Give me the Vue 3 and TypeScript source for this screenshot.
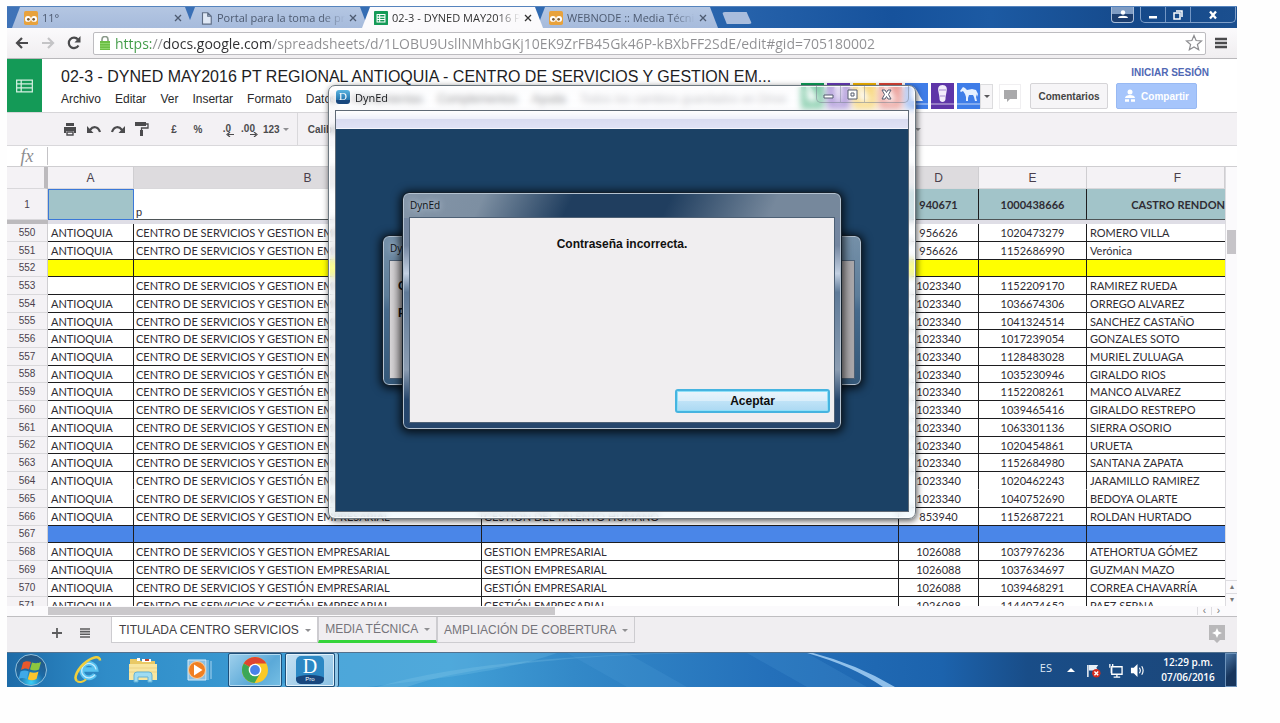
<script setup lang="ts">
import { ref } from 'vue'

interface BrowserTab { title: string; icon: 'owl' | 'page' | 'sheet'; active?: boolean }
interface Row { n: number; a: string; b: string; c: string; d: string; e: string; f: string; kind?: string }

const tabs: BrowserTab[] = [
  { title: '11°', icon: 'owl' },
  { title: 'Portal para la toma de pru', icon: 'page' },
  { title: '02-3 - DYNED MAY2016 P', icon: 'sheet', active: true },
  { title: 'WEBNODE :: Media Técnic', icon: 'owl' },
]

const menus = ['Archivo', 'Editar', 'Ver', 'Insertar', 'Formato', 'Datos', 'Herramientas', 'Complementos', 'Ayuda']
const url = ref('https://docs.google.com/spreadsheets/d/1LOBU9UsllNMhbGKj10EK9ZrFB45Gk46P-kBXbFF2SdE/edit#gid=705180002')
const formula = ref('')

const people = [
  { color: '#0f9d58', kind: 'bird' },
  { color: '#673ab7', kind: 'foot' },
  { color: '#f4b400', kind: 'bird' },
  { color: '#db4437', kind: 'bird' },
  { color: '#3f7de8', kind: 'bird' },
  { color: '#5e35a8', kind: 'foot' },
  { color: '#3f7de8', kind: 'horse' },
]

const ant = 'ANTIOQUIA'
const plain = 'CENTRO DE SERVICIOS Y GESTION EMPRESARIAL'
const accent = 'CENTRO DE SERVICIOS Y GESTIÓN EMPRESARIAL'
const th = 'GESTION DEL TALENTO HUMANO'
const ge = 'GESTION EMPRESARIAL'
const gea = 'GESTIÓN EMPRESARIAL'

const rows: Row[] = [
  { n: 550, a: ant, b: plain, c: th, d: '956626', e: '1020473279', f: 'ROMERO VILLA' },
  { n: 551, a: ant, b: plain, c: th, d: '956626', e: '1152686990', f: 'Verónica' },
  { n: 552, a: '', b: '', c: '', d: '', e: '', f: '', kind: 'short yellow' },
  { n: 553, a: '', b: plain, c: th, d: '1023340', e: '1152209170', f: 'RAMIREZ RUEDA' },
  { n: 554, a: ant, b: plain, c: th, d: '1023340', e: '1036674306', f: 'ORREGO ALVAREZ' },
  { n: 555, a: ant, b: plain, c: th, d: '1023340', e: '1041324514', f: 'SANCHEZ CASTAÑO', kind: 'short' },
  { n: 556, a: ant, b: plain, c: th, d: '1023340', e: '1017239054', f: 'GONZALES SOTO' },
  { n: 557, a: ant, b: plain, c: th, d: '1023340', e: '1128483028', f: 'MURIEL ZULUAGA' },
  { n: 558, a: ant, b: accent, c: th, d: '1023340', e: '1035230946', f: 'GIRALDO RIOS', kind: 'short' },
  { n: 559, a: ant, b: accent, c: th, d: '1023340', e: '1152208261', f: 'MANCO ALVAREZ' },
  { n: 560, a: ant, b: plain, c: th, d: '1023340', e: '1039465416', f: 'GIRALDO RESTREPO' },
  { n: 561, a: ant, b: plain, c: th, d: '1023340', e: '1063301136', f: 'SIERRA OSORIO' },
  { n: 562, a: ant, b: plain, c: th, d: '1023340', e: '1020454861', f: 'URUETA', kind: 'short' },
  { n: 563, a: ant, b: plain, c: th, d: '1023340', e: '1152684980', f: 'SANTANA ZAPATA' },
  { n: 564, a: ant, b: accent, c: th, d: '1023340', e: '1020462243', f: 'JARAMILLO RAMIREZ', kind: 'open' },
  { n: 565, a: ant, b: plain, c: th, d: '1023340', e: '1040752690', f: 'BEDOYA OLARTE' },
  { n: 566, a: ant, b: plain, c: th, d: '853940', e: '1152687221', f: 'ROLDAN HURTADO' },
  { n: 567, a: '', b: '', c: '', d: '', e: '', f: '', kind: 'short blue' },
  { n: 568, a: ant, b: plain, c: ge, d: '1026088', e: '1037976236', f: 'ATEHORTUA GÓMEZ' },
  { n: 569, a: ant, b: plain, c: ge, d: '1026088', e: '1037634697', f: 'GUZMAN MAZO' },
  { n: 570, a: ant, b: accent, c: gea, d: '1026088', e: '1039468291', f: 'CORREA CHAVARRÍA' },
  { n: 571, a: ant, b: accent, c: gea, d: '1026088', e: '1144074652', f: 'PAEZ SERNA' },
]
</script>

<template>
  <div class="desktop">
    <header class="tabstrip">
      <nav class="tabs" aria-label="Pestañas">
        <div v-for="t in tabs" :key="t.title" class="tab" :class="{ active: t.active }">
          <svg v-if="t.icon === 'owl'" class="fav" viewBox="0 0 16 16">
            <rect width="16" height="16" rx="2" fill="#e8a23c" />
            <circle cx="4.500" cy="9" r="3.400" fill="#fff" /><circle cx="11.500" cy="9" r="3.400" fill="#fff" />
            <circle cx="5" cy="9.500" r="1.500" fill="#7a5a30" /><circle cx="11" cy="9.500" r="1.500" fill="#7a5a30" />
          </svg>
          <svg v-else-if="t.icon === 'page'" class="fav" viewBox="0 0 16 16">
            <path d="M4 2h6l4 4v9H4zM10 2v4h4" fill="#dfe8f5" stroke="#5e6d85" stroke-width="1.300" />
          </svg>
          <svg v-else class="fav" viewBox="0 0 16 16">
            <rect width="16" height="16" rx="1" fill="#149a57" />
            <path d="M3.500 4h9v8.500h-9zM3.500 7h9M3.500 9.700h9M6.500 4v8.500" fill="none" stroke="#fff" stroke-width="1.200" />
          </svg>
          <button class="tabtitle" type="button">{{ t.title }}</button>
          <button class="tabx" type="button" aria-label="Cerrar pestaña">
            <svg viewBox="0 0 8 8"><path d="M1 1l6 6M7 1l-6 6" stroke="currentColor" stroke-width="1.300" /></svg>
          </button>
        </div>
        <button class="newtab" type="button" aria-label="Nueva pestaña"></button>
      </nav>
      <button class="cap user" type="button" aria-label="Usuario">
        <svg viewBox="0 0 10 10"><circle cx="5" cy="2.500" r="2.200" fill="#fff" /><path d="M0 8c0-3 10-3 10 0z" fill="#fff" /></svg>
      </button>
      <div class="caps">
        <button class="cap" type="button" aria-label="Minimizar"><svg viewBox="0 0 10 10"><path d="M1 6h8v2.500H1z" fill="#fff" /></svg></button>
        <button class="cap" type="button" aria-label="Restaurar"><svg viewBox="0 0 10 10"><path d="M3 1h6v6M1 3h6v6H1z" fill="none" stroke="#fff" stroke-width="1.500" /></svg></button>
        <button class="cap wide" type="button" aria-label="Cerrar"><svg viewBox="0 0 10 10"><path d="M2 1.500l6 7M8 1.500l-6 7" stroke="#fff" stroke-width="2.300" /></svg></button>
      </div>
    </header>

    <div class="navbar">
      <button class="nav" type="button" aria-label="Atrás"><svg viewBox="0 0 14 14"><path d="M13 7H2M7 2L2 7l5 5" fill="none" stroke="#4a4a4c" stroke-width="2.200" /></svg></button>
      <button class="nav" type="button" aria-label="Adelante"><svg viewBox="0 0 14 14"><path d="M1 7h11M7 2l5 5-5 5" fill="none" stroke="#c4c4c6" stroke-width="2.200" /></svg></button>
      <button class="nav" type="button" aria-label="Recargar"><svg viewBox="0 0 14 14"><path d="M11.500 9.500A5.200 5.200 0 1 1 11 3.500" fill="none" stroke="#4a4a4c" stroke-width="2.200" /><path d="M13.500 0v6.500H7.500z" fill="#4a4a4c" /></svg></button>
      <label class="omnibox">
        <svg class="lock" viewBox="0 0 12 14"><path d="M3 6V3.500a3 3 0 0 1 6 0V6" fill="none" stroke="#8a9a8a" stroke-width="1.600" /><rect x="1" y="5" width="10" height="9" fill="#6cbf45" /><path d="M1 7.500h10M1 10h10M1 12.500h10" stroke="#8fd66c" /></svg>
        <input v-model="url" class="url" type="text" aria-label="Dirección" />
        <svg class="star" viewBox="0 0 18 18"><path d="M9 1.500l2.100 5 5.400.4-4.100 3.600 1.300 5.300L9 13l-4.700 2.800 1.300-5.300L1.500 6.900l5.400-.4z" fill="#fff" stroke="#8d8d90" stroke-width="1.200" /></svg>
      </label>
      <button class="nav burger" type="button" aria-label="Menú"><svg viewBox="0 0 12 12"><path d="M0 2h12M0 6h12M0 10h12" stroke="#4a4a4c" stroke-width="2.300" /></svg></button>
    </div>

    <section class="dochead">
      <a class="home" href="#" aria-label="Hojas de cálculo">
        <svg viewBox="0 0 18 14"><path d="M.7.700h16.600v12.600H.7zM.7 4.800h16.600M.7 9h16.600M5.500.700v12.600" fill="none" stroke="#d5f0e2" stroke-width="1.300" /></svg>
      </a>
      <div class="titles">
        <h1>02-3 - DYNED MAY2016 PT REGIONAL ANTIOQUIA - CENTRO DE SERVICIOS Y GESTION EM...</h1>
        <div class="menus">
          <button v-for="m in menus" :key="m" type="button">{{ m }}</button>
          <span class="saved">Todos los cambios guardados en Drive</span>
        </div>
      </div>
      <div class="account">
        <a class="signin" href="#">INICIAR SESIÓN</a>
        <div class="collab">
          <svg v-for="(p, i) in people" :key="i" class="avatar" viewBox="0 0 23 26">
            <rect width="23" height="26" :fill="p.color" />
            <path v-if="p.kind === 'bird'" d="M5 3c6-1 8 8 13 15H6z" fill="#fff" />
            <template v-else-if="p.kind === 'foot'">
              <path d="M11.500 2c4 0 5 3 4 7-.5 3-1 4-1 7 0 4-6 4-6 0 0-3-.5-4-1-7-1-4 0-7 4-7z" fill="#f2ecfb" />
              <path d="M8 7h7M9 13h5" stroke="#a58bd0" />
            </template>
            <path v-else d="M3 8l3-4 2 1 2 2 5-1 4 1 2 4-1 3-1-3v3l1 4h-2l-1-4-1-2h-4l-1 3v3H9v-4l-1-3-2-3-2 1z" fill="#e6f0ff" />
            <path d="M0 21h23" stroke="#fff" opacity=".7" />
          </svg>
          <button class="drop" type="button" aria-label="Más usuarios"><i class="car dark"></i></button>
          <button class="chat" type="button" aria-label="Chat"><svg viewBox="0 0 13 12"><path d="M0 0h13v9H6l-3 3V9H0z" fill="#a9a9ab" /></svg></button>
          <button class="comment" type="button">Comentarios</button>
          <button class="share" type="button">
            <svg viewBox="0 0 12 14"><circle cx="6" cy="3" r="2.500" fill="#fff" /><path d="M1 9c0-4 10-4 10 0z" fill="#fff" /><path d="M1 11.500h4M7 11.500h4" stroke="#fff" stroke-width="2.500" /></svg>
            Compartir
          </button>
        </div>
      </div>
    </section>

    <div class="toolbar">
      <button type="button" class="t" aria-label="Imprimir"><svg viewBox="0 0 14 14"><path d="M3 1h8v3H3zM1 5h12v6h-2V9H3v2H1z" fill="#4b4b4d" /><path d="M4 10h6v3H4z" fill="none" stroke="#4b4b4d" stroke-width="1.400" /></svg></button>
      <button type="button" class="t" aria-label="Deshacer"><svg viewBox="0 0 14 14"><path d="M3 8c3-4 8-4 10 2" fill="none" stroke="#4b4b4d" stroke-width="2.200" /><path d="M0 4v7h6.500z" fill="#4b4b4d" /></svg></button>
      <button type="button" class="t" aria-label="Rehacer"><svg viewBox="0 0 14 14"><path d="M11 8C8 4 3 4 1 10" fill="none" stroke="#4b4b4d" stroke-width="2.200" /><path d="M14 4v7H7.500z" fill="#4b4b4d" /></svg></button>
      <button type="button" class="t" aria-label="Copiar formato"><svg viewBox="0 0 14 14"><path d="M0 0h11v4H0zM5 8h3v6H5z" fill="#4b4b4d" /><path d="M11 2h2v4H6.500v3" fill="none" stroke="#4b4b4d" stroke-width="1.300" /></svg></button>
      <button type="button" class="t gap">£</button>
      <button type="button" class="t">%</button>
      <button type="button" class="t dec">.0<svg viewBox="0 0 8 5"><path d="M8 2.500H2M4 0L1 2.500 4 5" fill="none" stroke="#4b4b4d" stroke-width="1.200" /></svg></button>
      <button type="button" class="t dec">.00<svg viewBox="0 0 8 5"><path d="M0 2.500h6M4 0l3 2.500L4 5" fill="none" stroke="#4b4b4d" stroke-width="1.200" /></svg></button>
      <button type="button" class="num">123 <i class="car"></i></button>
      <button type="button" class="font">Calibri</button>
      <button type="button" class="lastcar" aria-label="Más"><i class="car"></i></button>
    </div>

    <label class="fx"><span>fx</span><input v-model="formula" type="text" aria-label="Fórmula" /></label>

    <div class="gridwrap">
      <div class="grid">
        <table>
          <colgroup><col class="c0" /><col class="ca" /><col class="cb" /><col class="cc" /><col class="cd" /><col class="ce" /><col class="cf" /></colgroup>
          <thead>
            <tr class="letters">
              <th class="corner"></th><th>A</th><th class="sel">B</th><th class="sel">C</th><th class="sel">D</th><th>E</th><th class="fcol">F</th>
            </tr>
            <tr class="frozen">
              <th scope="row">1</th><td class="teal active"></td><td class="name">p</td><td class="teal"></td>
              <td class="teal ctr">940671</td><td class="teal ctr">1000438666</td><td class="teal right">CASTRO RENDON</td>
            </tr>
            <tr class="bar"><th></th><td colspan="6"></td></tr>
          </thead>
          <tbody>
            <tr v-for="r in rows" :key="r.n" :class="r.kind">
              <th scope="row">{{ r.n }}</th>
              <td>{{ r.a }}</td><td>{{ r.b }}</td><td>{{ r.c }}</td>
              <td class="ctr">{{ r.d }}</td><td class="ctr">{{ r.e }}</td><td>{{ r.f }}</td>
            </tr>
          </tbody>
        </table>
      </div>
      <div class="vscroll"><div class="vthumb"></div><button type="button" aria-label="Subir">▴</button><button type="button" aria-label="Bajar">▾</button></div>
    </div>
    <div class="hscroll"><div class="hthumb"></div><button type="button" aria-label="Izquierda">‹</button><button type="button" aria-label="Derecha">›</button></div>

    <footer class="sheets">
      <button type="button" class="ic" aria-label="Agregar hoja"><svg viewBox="0 0 10 10"><path d="M5 0v10M0 5h10" stroke="#5c5c5e" stroke-width="1.800" /></svg></button>
      <button type="button" class="ic lines" aria-label="Todas las hojas"><svg viewBox="0 0 10 10"><path d="M0 1h10M0 3.600h10M0 6.300h10M0 9h10" stroke="#5c5c5e" stroke-width="1.600" /></svg></button>
      <button type="button" class="sheet on">TITULADA CENTRO SERVICIOS <i class="car"></i></button>
      <button type="button" class="sheet green">MEDIA TÉCNICA <i class="car"></i></button>
      <button type="button" class="sheet">AMPLIACIÓN DE COBERTURA <i class="car"></i></button>
      <button type="button" class="explore" aria-label="Explorar"><svg viewBox="0 0 16 18"><path d="M0 0h16v15h-5l-3 3-3-3H0z" fill="#b9b8ba" /><path d="M8 3l1.500 3.500L13 8 9.500 9.500 8 13 6.500 9.500 3 8l3.500-1.500z" fill="#fff" /></svg></button>
    </footer>

    <div class="taskbar">
      <svg class="swoosh" viewBox="0 0 1230 35" preserveAspectRatio="none">
        <path d="M330 0h220c-60 22-140 28-190 35h-90z" fill="#7cc6ea" opacity=".25" />
        <path d="M400 35c60-22 180-34 300-35h-40c-120 3-230 16-290 35z" fill="#9ad6f2" opacity=".2" />
        <path d="M560 0l60 35h60L620 0zM740 0l60 35h60L800 0z" fill="#5aa7de" opacity=".18" />
        <path d="M806 0q45 12 82 35h-12Q845 13 800 0z" fill="#a5d0f5" opacity=".85" />
      </svg>
      <button type="button" class="orb" aria-label="Inicio">
        <svg viewBox="0 0 34 34">
          <defs><radialGradient id="orbFill" cx=".5" cy=".9" r=".9"><stop offset="0" stop-color="#38d0f8" /><stop offset=".45" stop-color="#1b6aa6" /><stop offset="1" stop-color="#26547e" /></radialGradient></defs>
          <circle cx="17" cy="17" r="15.500" fill="url(#orbFill)" stroke="#8fc0dd" />
          <path d="M9 9.500c3-2 5.500-1.500 8-.5l-2 7.500c-3-1.500-5-1-8 .5z" fill="#e8582c" />
          <path d="M18 9.500c3 1 5.500 1 9-.5l-2 7.500c-3 1.500-5.500 1-9 0z" fill="#8cc63f" />
          <path d="M6.500 18.500c3-1.500 5.500-1.500 8.200 0l-2 7.500c-3-1.500-5-1.500-8 0z" fill="#3fa9e8" />
          <path d="M15.800 19c3 1 5.500 1 8.700-.5l-2 7.500c-3 1.500-6 1.500-8.700.3z" fill="#fcc62d" />
        </svg>
      </button>
      <button type="button" class="app" aria-label="Internet Explorer">
        <svg viewBox="0 0 30 28">
          <path d="M22 18.500a7.200 7.200 0 1 1 1-5H10.500" fill="none" stroke="#58c2f0" stroke-width="4.600" />
          <path d="M22 18.500a7.200 7.200 0 1 1 1-5" fill="none" stroke="#c5ecff" stroke-width="1.200" />
          <path d="M4 25c-4-3 1-13 9-19S27 0 27 4.500" fill="none" stroke="#f0cf3c" stroke-width="2.600" /><path d="M4 25c2 2 6 1 9-1.500" fill="none" stroke="#f0cf3c" stroke-width="2" />
        </svg>
      </button>
      <button type="button" class="app" aria-label="Explorador">
        <svg viewBox="0 0 30 28">
          <path d="M2 3h9l2 2h14v19H2z" fill="#e9c965" /><path d="M9 2h3v3H9zM14 3h9v3h-9z" fill="#fff" /><path d="M17 3h4v2h-4z" fill="#c0442e" />
          <path d="M1 8h28v16H1z" fill="#f8e6a0" /><path d="M1 12h28M1 16h28" stroke="#ecd284" />
          <path d="M6 26v-7q0-3 3-3h12q3 0 3 3v7h-4v-5H10v5z" fill="#9fdcf2" stroke="#64b2d6" />
        </svg>
      </button>
      <button type="button" class="app last" aria-label="Reproductor">
        <svg viewBox="0 0 30 28">
          <path d="M5 4h18v20H5z" fill="#8cc0e4" stroke="#d5ecfa" /><path d="M25 4v20M28 5v18" stroke="#a8d4ef" />
          <circle cx="14" cy="14" r="8.500" fill="#f07f22" stroke="#fbd0a0" /><path d="M11 8.500l8.500 5.500L11 19.500z" fill="#fff" />
        </svg>
      </button>
      <button type="button" class="task" aria-label="Chrome">
        <svg viewBox="0 0 28 28">
          <circle cx="14" cy="14" r="13" fill="#fbc926" />
          <path d="M14 14L2.700 7.500A13 13 0 0 1 25.300 7.500H14z" fill="#df4431" />
          <path d="M14 14L2.700 7.500A13 13 0 0 0 13.500 27l5.500-9.500z" fill="#3ba757" />
          <circle cx="14" cy="14" r="6.300" fill="#fff" /><circle cx="14" cy="14" r="4.900" fill="#4a82ea" />
        </svg>
      </button>
      <button type="button" class="task stacked" aria-label="DynEd Pro">
        <span class="dyn"><b>D</b><small>Pro</small></span>
      </button>
      <div class="tray">
        <span class="lang">ES</span>
        <button type="button" class="tri" aria-label="Iconos ocultos"></button>
        <svg class="ti" viewBox="0 0 16 16"><path d="M2 2v13" stroke="#fff" stroke-width="1.500" /><path d="M3 2h10l-2 3 2 3H3z" fill="#e8f0f8" /><circle cx="11" cy="11" r="4.500" fill="#d52b1e" /><path d="M9 9l4 4M13 9l-4 4" stroke="#fff" stroke-width="1.500" /></svg>
        <svg class="ti" viewBox="0 0 16 16"><path d="M4 4h11v8H4zM6 15h7M9.500 12v3M2 1v4M5 1v3M3.500 5v6" fill="none" stroke="#fff" stroke-width="1.400" /></svg>
        <svg class="ti" viewBox="0 0 16 16"><path d="M1 5h3l4-4v14l-4-4H1z" fill="#fff" /><path d="M10 5q2 3 0 6M12.500 3.500q3 4.500 0 9" fill="none" stroke="#fff" stroke-width="1.200" /></svg>
        <div class="clock">12:29 p.m.<br />07/06/2016</div>
        <button type="button" class="show" aria-label="Mostrar escritorio"></button>
      </div>
    </div>

    <section class="win" aria-label="DynEd">
      <div class="wintitle">
        <span class="mini">D</span><span class="wtext">DynEd</span>
        <div class="wincaps">
          <button type="button" aria-label="Minimizar ventana"><svg viewBox="0 0 11 11"><path d="M1 6h9v3H1z" fill="#fff" stroke="#555c6e" /></svg></button>
          <button type="button" aria-label="Maximizar ventana"><svg viewBox="0 0 11 11"><path d="M1 1h9v9H1zM4 4h3v3H4z" fill="#fff" stroke="#555c6e" /></svg></button>
          <button type="button" class="x" aria-label="Cerrar ventana"><svg viewBox="0 0 11 11"><path d="M1 1h3l1.500 2.500L7 1h3L7.500 5.500 10 10H7L5.500 7.500 4 10H1l2.500-4.500z" fill="#fff" stroke="#555c6e" /></svg></button>
        </div>
      </div>
      <div class="winbody"><div class="winmenu"></div></div>

      <div class="dlg back">
        <div class="dtitle">DynEd</div>
        <div class="dbody dim"><p>C</p><p>P</p></div>
      </div>
      <div class="dlg front" role="dialog" aria-label="DynEd">
        <div class="dtitle">DynEd</div>
        <div class="dbody">
          <p class="msg">Contraseña incorrecta.</p>
          <button type="button" class="ok">Aceptar</button>
        </div>
      </div>
    </section>
  </div>
</template>

<style>
html, body { background: #fefefe; }
</style>

<style scoped>
* { box-sizing: border-box; }
.desktop { position: relative; margin: 5px 43px 36px 7px; padding-top: 1px; background: #fff; font-family: "Liberation Sans", Arial, sans-serif; font-size: 12px; color: #222; }
button { font: inherit; color: inherit; border: 0; padding: 0; margin: 0; background: none; white-space: nowrap; }
svg { display: block; }
h1, p { margin: 0; font-weight: normal; }

.tabstrip { display: flex; height: 22px; background: linear-gradient(90deg, #3f73b8 0, #2c68b0 55%, #16529c 72%, #1c5aa3 80%, #15498a 92%, #1b4f8f); align-items: flex-start; font-family: "Open Sans", "Noto Sans", sans-serif; border-top: 1px solid #5583bd; }
.tabs { display: flex; flex: 1; padding-left: 5px; align-items: flex-start; }
.tab { display: flex; align-items: center; width: 181px; height: 21px; margin-right: -6px; padding: 0 11px 0 12px; background: linear-gradient(#b4c6e2, #a6bbdc); clip-path: polygon(8px 0, 173px 0, 181px 100%, 0 100%); color: #4d5a70; }
.tab.active { background: #fbfafc; color: #333; z-index: 1; }
.fav { width: 14px; height: 14px; flex: none; }
.tabtitle { flex: 1; min-width: 0; margin: 0 4px; overflow: hidden; text-align: left; font-size: 11px; line-height: 18px; -webkit-mask-image: linear-gradient(90deg, #000 82%, transparent); mask-image: linear-gradient(90deg, #000 82%, transparent); }
.tabx svg { width: 8px; height: 8px; }
.newtab { width: 30px; height: 12px; margin: 5px 0 0 10px; background: #a9bddd; border-radius: 3px; clip-path: polygon(0 0, 82% 0, 100% 100%, 16% 100%); }
.cap { display: flex; justify-content: center; align-items: center; width: 25px; height: 15px; border-right: 1px solid #7396c4; }
.cap svg { width: 10px; height: 10px; }
.cap.wide { width: 44px; border: 0; }
.cap.user { width: 23px; margin-right: 6px; height: 16px; border: 1px solid #a9bdd8; border-top: 0; border-radius: 0 0 4px 4px; background: linear-gradient(#7f9cc3 50%, #1d3f70 50%); }
.caps { display: flex; height: 16px; border: 1px solid #7f9fc9; border-top: 0; border-radius: 0 0 5px 5px; margin-right: 1px; }

.navbar { display: flex; align-items: center; height: 31px; padding: 0 10px 0 8px; background: linear-gradient(#fbfafc, #f0eef0); border-bottom: 1px solid #b9b8bb; }
.nav { width: 14px; height: 14px; margin-right: 12px; }
.nav svg { width: 14px; height: 14px; }
.omnibox { display: flex; flex: 1; align-items: center; height: 23px; padding: 0 2px 0 5px; background: #fff; border: 1px solid #bdbcc0; border-radius: 2px; }
.lock { width: 12px; height: 14px; }
.url { flex: 1; min-width: 0; height: 21px; margin-left: 4px; padding: 0; border: 0; outline: 0; font: 14px/20px "Open Sans", "Noto Sans", sans-serif; -webkit-text-fill-color: transparent; background: linear-gradient(90deg, #3f9a45 0 36px, #8f8f92 36px 47px, #2f2f31 47px 157px, #8f8f92 157px); -webkit-background-clip: text; background-clip: text; }
.star { width: 18px; height: 18px; }
.burger { width: 12px; margin: 0 0 0 9px; }
.burger svg { width: 12px; height: 12px; }

.dochead { display: flex; height: 54px; border-bottom: 1px solid #d6d5d8; }
.home { display: flex; align-items: center; justify-content: center; width: 35px; background: #149a57; }
.home svg { width: 17px; height: 14px; }
.titles { flex: 1; min-width: 0; padding: 8px 0 0 19px; }
h1 { font-size: 16px; line-height: 20px; color: #1d1d1f; white-space: nowrap; }
.menus { display: flex; gap: 14px; margin-top: 4px; line-height: 16px; color: #2a2a2c; white-space: nowrap; }
.menus button { line-height: 16px; }
.saved { color: #8b8b90; }
.account { display: flex; flex-direction: column; align-items: flex-end; padding-right: 28px; margin-left: -200px; }
.signin { margin-top: 8px; font-size: 10px; line-height: 12px; font-weight: bold; color: #5068b4; text-decoration: none; }
.collab { display: flex; align-items: center; margin: 4px 12px 0 0; height: 26px; }
.avatar { width: 23px; height: 26px; margin-right: 3px; }
.drop { width: 13px; height: 25px; margin-left: -3px; border: 1px solid #dcdcde; background: #f6f5f7; }
.chat { display: flex; align-items: center; justify-content: center; width: 22px; height: 25px; margin: 0 9px 0 6px; border: 1px solid #f0eff1; }
.chat svg { width: 13px; height: 12px; }
.comment, .share { height: 26px; font-size: 10px; font-weight: bold; border-radius: 2px; }
.comment { width: 78px; margin-right: 8px; border: 1px solid #d5d4d7; background: #f6f5f7; color: #444; }
.share { display: flex; align-items: center; justify-content: center; gap: 5px; width: 81px; background: #a6c5fb; border: 1px solid #98b9f3; color: #fff; }
.share svg { width: 12px; height: 14px; }

.toolbar { display: flex; align-items: center; height: 33px; padding-left: 51px; background: #f3f1f4; border-bottom: 1px solid #d9d8db; font-size: 10px; font-weight: bold; color: #4b4b4d; }
.t { display: flex; align-items: center; justify-content: center; width: 24px; height: 20px; }
.t svg { width: 14px; height: 14px; }
.t.gap { margin-left: 8px; }
.t.dec { justify-content: flex-end; align-items: flex-end; padding-bottom: 4px; line-height: 12px; }
.t.dec svg { width: 8px; height: 5px; margin: 0 0 -2px -5px; }
.num { display: flex; align-items: center; gap: 3px; margin: 0 8px 0 5px; }
.car { display: inline-block; width: 0; height: 0; border: 3px solid transparent; border-top-color: #8f8f92; border-bottom: 0; vertical-align: middle; }
.car.dark { border-top-color: #59595c; }
.font { height: 32px; padding-left: 10px; border-left: 1px solid #d9d8db; }
.lastcar { margin-left: auto; margin-right: 316px; }

.fx { display: flex; align-items: center; height: 21px; border-bottom: 1px solid #cfced1; }
.fx span { width: 41px; text-align: center; font: italic 18px/18px "Liberation Serif", serif; color: #8c8c8f; border-right: 1px solid #c4c3c6; }
.fx input { flex: 1; border: 0; outline: 0; height: 18px; background: none; }

.gridwrap { display: flex; height: 439px; }
.grid { flex: 1; min-width: 0; overflow: hidden; }
table { width: 100%; table-layout: fixed; border-collapse: separate; border-spacing: 0; }
.c0 { width: 41px; } .ca { width: 86px; } .cb { width: 348px; } .cd { width: 80px; } .ce { width: 108px; } .cf { width: 138px; }
th, td { padding: 0; height: 18px; overflow: hidden; white-space: nowrap; }
th { background: #f4f2f5; border-right: 1px solid #cfced1; border-bottom: 1px solid #d9d8db; color: #4a3f4c; font-weight: normal; font-size: 10px; line-height: 12px; text-align: center; }
td { padding: 2px 0 0 2px; line-height: 14px; vertical-align: top; font-family: Lato, "Open Sans", sans-serif; font-size: 11px; color: #2f2c33; border-right: 1px solid #1d1d1f; border-bottom: 1px solid #1d1d1f; }
td.ctr { text-align: center; padding-left: 0; }
td:last-child { border-right: 0; padding-left: 3px; }
tbody td:nth-child(2) { padding-left: 3px; }
.short th, .short td { height: 17px; }
.open td { border-bottom-color: #fff; }
.yellow td { background: #ffff00; }
.blue td { background: #4a86e8; }
.letters th { height: 22px; font-size: 12px; }
.letters .sel { background: #dddbde; }
.letters .corner { border-right: 4px solid #bcbabd; }
.letters .fcol { padding-left: 44px; }
.frozen th, .frozen td { height: 31px; vertical-align: middle; padding-top: 2px; }
.frozen td { font-weight: bold; border-bottom-color: #4e5557; }
.frozen td.teal { background: #a2c4c9; }
.frozen td.active { border: 1px solid #3b78d8; }
.frozen td.name { background: #fff; vertical-align: bottom; font-family: "Liberation Sans", Arial, sans-serif; font-weight: normal; border-right: 0; }
.frozen td.right { text-align: right; }
.bar th { height: 4px; background: #bcbabd; border: 0; line-height: 0; }
.bar td { height: 4px; background: #dfdee6; border: 0; padding: 0; line-height: 0; }
.vscroll { display: flex; flex-direction: column; width: 12px; border-left: 1px solid #dddce0; background: #fbfafc; }
.vthumb { width: 9px; height: 24px; margin: 63px 0 auto 1px; background: #c6c4c8; }
.vscroll button { height: 13px; border-top: 1px solid #dddce0; font-size: 8px; line-height: 12px; color: #777; }
.hscroll { display: flex; height: 11px; padding: 1px 12px 1px 41px; background: #fbfafc; border-bottom: 1px solid #bfbec1; }
.hthumb { width: 507px; margin-right: auto; background: #cac8cb; }
.hscroll button { width: 14px; border-left: 1px solid #dddce0; font-size: 10px; line-height: 8px; color: #777; }

.sheets { display: flex; align-items: flex-start; height: 35px; padding: 0 12px 0 45px; background: #f0eef1; }
.ic { width: 10px; height: 10px; margin: 11px 0 0; }
.ic svg { width: 10px; height: 10px; }
.lines { margin: 11px 21px 0 18px; }
.sheet { height: 26px; padding: 0 6px; border: 1px solid #cdccd0; border-top: 0; color: #75747a; line-height: 24px; }
.sheet .car { margin-left: 3px; }
.sheet.on { padding-left: 7px; background: #fff; color: #414044; }
.sheet.green { border-bottom: 3px solid #35d43a; line-height: 22px; }
.explore { width: 16px; height: 18px; margin: 8px 0 0 auto; }
.explore svg { width: 16px; height: 18px; }

.taskbar { position: relative; display: flex; align-items: center; height: 35px; border-top: 1px solid #53718d; background: linear-gradient(90deg, #1d6ba8 0, #2f8cc8 8%, #3b9ad2 20%, #419fd6 36%, #3389c8 46%, #2470ba 62%, #1c63ad 76%, #194d88 83%, #1c4678 100%); }
.swoosh { position: absolute; inset: 0; width: 100%; height: 100%; }
.taskbar button, .tray { position: relative; }
.orb { width: 34px; height: 34px; margin: 0 25px 0 7px; }
.orb svg { width: 34px; height: 34px; }
.app { width: 30px; margin-right: 25px; }
.app svg { width: 30px; height: 28px; }
.app.last { margin-right: 15px; }
.task { display: flex; align-items: center; justify-content: center; width: 54px; height: 34px; margin-right: 3px; border: 1px solid #1d4f7a; border-radius: 2px; background: linear-gradient(135deg, #9fd0ec, #5ba9d8 60%, #76bfe4); box-shadow: inset 0 0 0 1px #b5dcf2; }
.task svg { width: 28px; height: 28px; }
.task.stacked { width: 50px; background: linear-gradient(135deg, #c4e0f2, #8cc2e4); box-shadow: inset 0 0 0 1px #e4f3fc, 3px 0 0 #8fc6e6, 4px 0 0 #1d4f7a; }
.dyn { display: flex; flex-direction: column; align-items: center; width: 28px; height: 28px; overflow: hidden; border-radius: 5px; background: #2c88c4; color: #fff; }
.dyn b { height: 19px; font: 20px/20px "Liberation Serif", serif; }
.dyn small { width: 28px; height: 9px; font-size: 6px; line-height: 8px; background: #17477e; border-radius: 50% 50% 0 0 / 3px 3px 0 0; }
.tray { display: flex; align-items: center; height: 34px; margin-left: auto; color: #fff; font-family: "Open Sans", "Noto Sans", sans-serif; font-size: 10px; line-height: 15px; }
.lang { font-size: 11px; margin: -5px 15px 0 0; color: #dfe9f5; }
.tri { width: 0; height: 0; border: 4px solid transparent; border-bottom-color: #fff; border-top: 0; margin-right: 11px; }
.ti { width: 15px; height: 15px; margin-right: 7px; }
.clock { width: 72px; text-align: center; font-weight: 600; }
.show { width: 12px; height: 34px; margin-left: 1px; border: 1px solid #6d93bb; background: linear-gradient(135deg, #4a76a6, #17355c 60%); }

.win { position: absolute; left: 321px; top: 80px; width: 588px; height: 434px; padding: 0 6px 6px; border: 1px solid #6d7880; border-radius: 7px; background: linear-gradient(rgba(252, 252, 254, .5), rgba(240, 250, 255, .7)); backdrop-filter: blur(3px); box-shadow: inset 0 0 0 1px rgba(255, 255, 255, .85), 1px 2px 6px rgba(0, 0, 0, .65); display: flex; flex-direction: column; }
.wintitle { display: flex; align-items: flex-start; height: 24px; }
.mini { width: 14px; height: 14px; margin: 4px 5px 0 1px; border-radius: 3px; background: linear-gradient(#5ab4e0, #2272ac 75%, #17477e 75%); color: #fff; font: 11px/12px "Liberation Serif", serif; text-align: center; }
.wtext { flex: 1; font: 11px/15px "Open Sans", "Noto Sans", sans-serif; margin-top: 4px; color: #16181c; }
.wincaps { display: flex; height: 17px; border: 1px solid rgba(120, 130, 145, .55); border-top: 0; border-radius: 0 0 5px 5px; }
.wincaps button { display: flex; align-items: center; justify-content: center; width: 24px; border-right: 1px solid rgba(120, 130, 145, .45); }
.wincaps button.x { width: 43px; border: 0; }
.wincaps svg { width: 11px; height: 11px; }
.winbody { flex: 1; border: 1px solid #5f6a76; background: #1b4165; }
.winmenu { height: 18px; background: linear-gradient(#fff 0, #eef0fa 45%, #d9dcf0 50%, #dfe2f4 100%); border-bottom: 1px solid #f4f5fb; }
.dlg { position: absolute; display: flex; flex-direction: column; padding: 0 5px 5px; border: 1px solid #b4c2d0; border-radius: 6px; outline: 1px solid #14202c; box-shadow: 0 1px 9px 3px rgba(0, 0, 0, .75); }
.back { left: 54px; top: 150px; width: 478px; height: 149px; background: linear-gradient(#7590a8, #5d7d9a 40%, #466a8c 50%, #345879); }
.front { left: 74px; top: 107px; width: 438px; height: 236px; background: linear-gradient(115deg, #8495a8 0, #7d8fa2 18%, #203e5f 38%, #203e5f 60%, #76889c 84%) 0 0 / 100% 24px no-repeat, linear-gradient(#7486a0 22%, #c3d0e2 34%, #5f7a98 42%, #8c9db2 75%, #26466c 88%); }
.dtitle { height: 23px; padding: 3px 0 0 1px; font: 10px/16px "Open Sans", "Noto Sans", sans-serif; color: #101418; text-shadow: 0 0 6px #dbe6f0; }
.dbody { flex: 1; display: flex; flex-direction: column; border: 1px solid #8795a5; outline: 1px solid #4d6075; outline-offset: -1px; background: #f0eef0; }
.dim { background: linear-gradient(90deg, #d6d4d6, #bab7b9 4%, #bab7b9 96%, #aaa7aa); padding: 18px 8px; gap: 12px; line-height: 15px; color: #111; }
.dim p { font-weight: bold; }
.msg { padding: 18px 0 0; text-align: center; font-weight: bold; font-size: 12px; line-height: 16px; color: #111; }
.ok { align-self: flex-end; width: 155px; height: 24px; margin: auto 4px 9px 0; border: 2px solid #46b4e0; border-radius: 3px; box-shadow: inset 0 0 0 1px #8fe0f8; background: linear-gradient(#eaf5fc 0, #daeefa 48%, #c0e3f7 50%, #abd9f3); font-weight: bold; font-size: 12px; color: #0d0d0d; }
</style>
